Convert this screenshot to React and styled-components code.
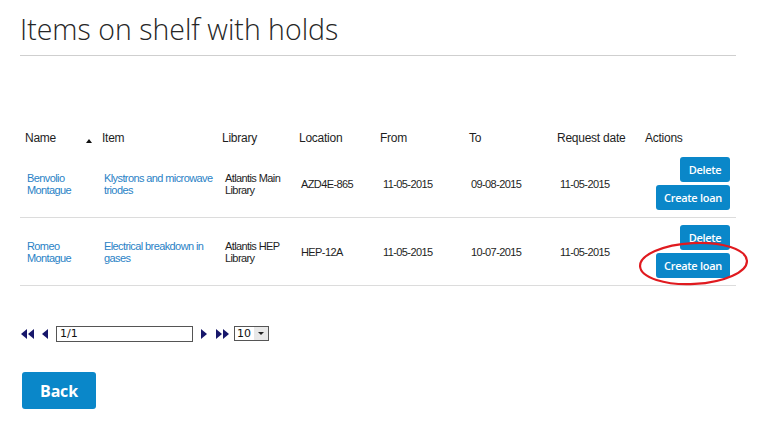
import React from 'react';
import styled, { createGlobalStyle } from 'styled-components';

const GlobalStyle = createGlobalStyle`
  body {
    margin: 0;
    background: #fff;
    font-family: "Liberation Sans", Arial, sans-serif;
  }
`;

const Page = styled.div`
  width: 770px;
  height: 428px;
  padding: 0 34px 0 20px;
  box-sizing: border-box;
`;

const Title = styled.h1`
  margin: 0;
  padding-top: 12px;
  padding-bottom: 9px;
  font-family: "Open Sans", sans-serif;
  font-weight: 300;
  font-size: 28.5px;
  line-height: 34px;
  color: #262626;
  border-bottom: 1px solid #cfcfcf;
`;

const Table = styled.table`
  margin-top: 69px;
  width: 716px;
  border-collapse: collapse;
  table-layout: fixed;
`;

const HeadCell = styled.th`
  text-align: left;
  font-weight: normal;
  font-size: 12px;
  letter-spacing: -0.25px;
  color: #1e1e1e;
  padding: 0 0 0 ${(p) => (p.$first ? 5 : 2)}px;
  height: 25px;
  vertical-align: middle;
  position: relative;
  white-space: nowrap;
`;

const SortArrow = styled.span`
  position: absolute;
  right: 8px;
  top: 14px;
  width: 0;
  height: 0;
  border-left: 3px solid transparent;
  border-right: 3px solid transparent;
  border-bottom: 4px solid #111;
`;

const Row = styled.tr`
  border-bottom: 1px solid #dcdcdc;
`;

const Cell = styled.td`
  font-size: 11px;
  letter-spacing: -0.6px;
  line-height: 12px;
  color: #1e1e1e;
  padding: 7px 0 7px ${(p) => p.$pl ?? 4}px;
  vertical-align: middle;
  white-space: nowrap;
`;

const Link = styled.a`
  color: #2a82c6;
  text-decoration: none;
`;

const Actions = styled.div`
  display: flex;
  flex-direction: column;
  align-items: flex-end;
  gap: 3px;
  padding-right: 6px;
`;

const Button = styled.button`
  font-family: "Open Sans", sans-serif;
  font-weight: 600;
  font-size: 11px;
  letter-spacing: -0.3px;
  color: #fff;
  background: #0a87c9;
  border: none;
  border-radius: 3px;
  width: ${(p) => p.$w}px;
  height: 25px;
  padding: 0;
  white-space: nowrap;
  cursor: pointer;
`;

const Marked = styled.span`
  position: relative;
  display: inline-flex;
`;

const Circle = styled.svg`
  position: absolute;
  left: -18px;
  top: -12px;
  pointer-events: none;
  overflow: visible;
`;

const Pager = styled.div`
  display: flex;
  align-items: center;
  margin-top: 39px;
  height: 17px;
`;

const Arrow = styled.svg`
  display: block;
  margin-left: ${(p) => p.$ml || 0}px;
`;

const PageInput = styled.div`
  width: 132px;
  height: 14px;
  border: 1px solid #555;
  font-family: "DejaVu Sans", Verdana, sans-serif;
  font-size: 11px;
  line-height: 14px;
  padding-left: 3px;
  color: #111;
  margin-left: 8px;
`;

const Select = styled.div`
  display: flex;
  align-items: stretch;
  width: 33px;
  height: 13px;
  border: 1px solid #555;
  margin-left: 5px;
  font-family: "DejaVu Sans", Verdana, sans-serif;
  font-size: 11px;
  line-height: 13px;
  color: #111;
`;

const SelectValue = styled.span`
  flex: 1;
  padding-left: 2px;
`;

const SelectButton = styled.span`
  width: 14px;
  background: #e8e8e8;
  display: flex;
  align-items: center;
  justify-content: center;
  &::after {
    content: '';
    border-left: 3px solid transparent;
    border-right: 3px solid transparent;
    border-top: 3px solid #222;
  }
`;

const BackButton = styled(Button)`
  margin-top: 30px;
  margin-left: 2px;
  height: 37px;
  font-size: 16px;
  font-weight: 700;
  letter-spacing: -0.2px;
`;

const rows = [
  {
    name: ['Benvolio', 'Montague'],
    item: ['Klystrons and microwave', 'triodes'],
    library: ['Atlantis Main', 'Library'],
    location: 'AZD4E-865',
    from: '11-05-2015',
    to: '09-08-2015',
    requested: '11-05-2015',
  },
  {
    name: ['Romeo', 'Montague'],
    item: ['Electrical breakdown in', 'gases'],
    library: ['Atlantis HEP', 'Library'],
    location: 'HEP-12A',
    from: '11-05-2015',
    to: '10-07-2015',
    requested: '11-05-2015',
    marked: true,
  },
];

const NAVY = '#17176b';
const widths = [80, 120, 77, 81, 89, 88, 88, 93];

function Lines({ parts }) {
  return parts.map((p, i) => (
    <React.Fragment key={i}>
      {i > 0 && <br />}
      {p}
    </React.Fragment>
  ));
}

export default function App() {
  return (
    <Page>
      <GlobalStyle />
      <Title>Items on shelf with holds</Title>

      <Table>
        <colgroup>
          {widths.map((w, i) => (
            <col key={i} style={{ width: w }} />
          ))}
        </colgroup>
        <thead>
          <tr>
            <HeadCell $first>
              Name
              <SortArrow />
            </HeadCell>
            <HeadCell>Item</HeadCell>
            <HeadCell>Library</HeadCell>
            <HeadCell>Location</HeadCell>
            <HeadCell>From</HeadCell>
            <HeadCell>To</HeadCell>
            <HeadCell>Request date</HeadCell>
            <HeadCell>Actions</HeadCell>
          </tr>
        </thead>
        <tbody>
          {rows.map((r, i) => (
            <Row key={i}>
              <Cell $pl={7}>
                <Link href="#">
                  <Lines parts={r.name} />
                </Link>
              </Cell>
              <Cell>
                <Link href="#">
                  <Lines parts={r.item} />
                </Link>
              </Cell>
              <Cell $pl={5}>
                <Lines parts={r.library} />
              </Cell>
              <Cell>{r.location}</Cell>
              <Cell $pl={5}>{r.from}</Cell>
              <Cell>{r.to}</Cell>
              <Cell $pl={5}>{r.requested}</Cell>
              <Cell $pl={0}>
                <Actions>
                  <Button $w={50}>Delete</Button>
                  {r.marked ? (
                    <Marked>
                      <Button $w={74}>Create loan</Button>
                      <Circle width="111" height="45" viewBox="0 0 111 45">
                        <ellipse
                          cx="55.5"
                          cy="22.5"
                          rx="53.5"
                          ry="20.5"
                          fill="none"
                          stroke="#e01a1f"
                          strokeWidth="2.2"
                          transform="rotate(-3 55.5 22.5)"
                        />
                      </Circle>
                    </Marked>
                  ) : (
                    <Button $w={74}>Create loan</Button>
                  )}
                </Actions>
              </Cell>
            </Row>
          ))}
        </tbody>
      </Table>

      <Pager>
        <Arrow width="13" height="10" viewBox="0 0 13 10" $ml={1}>
          <polygon points="6,0 6,10 0,5" fill={NAVY} />
          <polygon points="13,0 13,10 7,5" fill={NAVY} />
        </Arrow>
        <Arrow width="6" height="10" viewBox="0 0 6 10" $ml={8}>
          <polygon points="6,0 6,10 0,5" fill={NAVY} />
        </Arrow>
        <PageInput>1/1</PageInput>
        <Arrow width="6" height="10" viewBox="0 0 6 10" $ml={8}>
          <polygon points="0,0 0,10 6,5" fill={NAVY} />
        </Arrow>
        <Arrow width="13" height="10" viewBox="0 0 13 10" $ml={9}>
          <polygon points="0,0 0,10 6,5" fill={NAVY} />
          <polygon points="7,0 7,10 13,5" fill={NAVY} />
        </Arrow>
        <Select>
          <SelectValue>10</SelectValue>
          <SelectButton />
        </Select>
      </Pager>

      <BackButton $w={74}>Back</BackButton>
    </Page>
  );
}
